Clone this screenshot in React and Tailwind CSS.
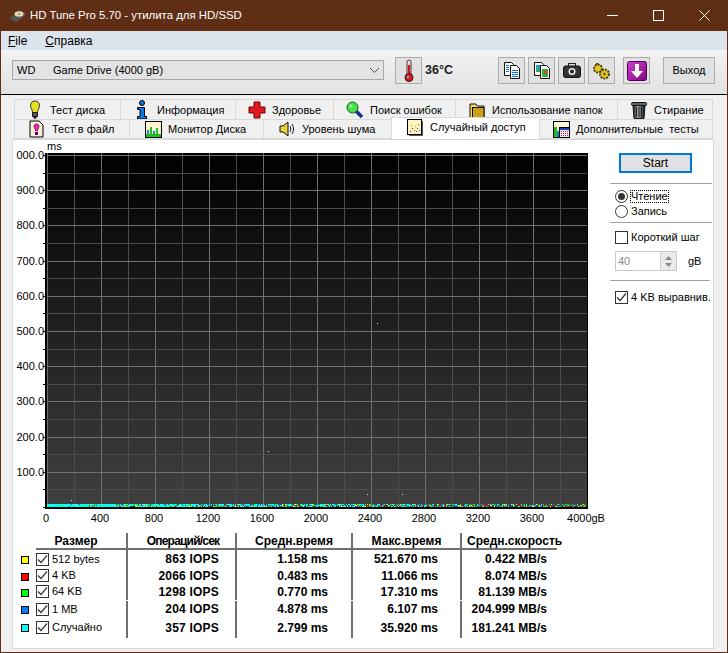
import React from 'react';

const font = 'font-["Liberation_Sans",Arial,sans-serif]';

// small hand drawn icons from the app
function Bulb() {
    return (
        <svg width="18" height="19" viewBox="0 0 18 19">
            <path d="M9 1c3 0 4.500 2 4.500 4.500 0 3-2 3.500-2 7h-5c0-3.500-2-4-2-7C4.500 3 6 1 9 1z" fill="#e6e020" stroke="#333" />
            <rect x="6.500" y="12.500" width="5" height="4" fill="#555" stroke="#222" />
            <rect x="7.500" y="16.500" width="3" height="2" fill="#111" />
        </svg>
    );
}
function Info() {
    return (
        <svg width="14" height="20" viewBox="0 0 14 20">
            <circle cx="7" cy="3" r="2.500" fill="#1078e0" stroke="#000" />
            <path d="M2.500 7.500h7v9h2v2.500h-9v-2.500h2.500v-7h-2.500z" fill="#1078e0" stroke="#000" />
        </svg>
    );
}
function Cross() {
    return (
        <svg width="18" height="18" viewBox="0 0 18 18">
            <path d="M6 1h6v5h5v6h-5v5H6v-5H1V6h5z" fill="#e01820" stroke="#700" />
        </svg>
    );
}
function Magnifier() {
    return (
        <svg width="18" height="18" viewBox="0 0 18 18">
            <path d="M10 10l6 6" stroke="#1a2a9a" strokeWidth="3.500" />
            <circle cx="6.500" cy="6.500" r="5.500" fill="#48e048" stroke="#186018" />
            <circle cx="5" cy="5" r="1.500" fill="#c8f8c8" />
        </svg>
    );
}
function Folder() {
    return (
        <svg width="16" height="18" viewBox="0 0 16 18">
            <path d="M1 16.500V3h6l1.500 2H15v11.500z" fill="#f0d860" stroke="#111" />
            <rect x="3.500" y="6.500" width="11.500" height="10" fill="#c8a018" stroke="#111" />
        </svg>
    );
}
function Trash() {
    return (
        <svg width="16" height="18" viewBox="0 0 16 18">
            <defs>
                <linearGradient id="tr" x1="0" x2="1">
                    <stop offset="0" stopColor="#111" />
                    <stop offset="0.4" stopColor="#aaa" />
                    <stop offset="1" stopColor="#111" />
                </linearGradient>
            </defs>
            <rect x="0.500" y="1.500" width="15" height="3" rx="1" fill="#666" stroke="#111" />
            <path d="M2 4.500h12l-1 13H3z" fill="url(#tr)" stroke="#111" />
            <path d="M5.500 6v10M8 6v10M10.500 6v10" stroke="#222" />
        </svg>
    );
}
function FileBang() {
    return (
        <svg width="15" height="18" viewBox="0 0 15 18">
            <path d="M1 1h9l4 4v12H1z" fill="#f4f0d8" stroke="#000" />
            <path d="M7.500 4c2 0 2.500 1 2.500 2.500S8.500 9 8.500 11h-2C6.500 9 5 8 5 6.500S5.500 4 7.500 4z" fill="#e020c0" stroke="#600" strokeWidth="0.600" />
            <rect x="6" y="12" width="3" height="3" fill="#700070" />
        </svg>
    );
}
function Bars() {
    return (
        <svg width="17" height="17" viewBox="0 0 17 17">
            <rect x="0.500" y="0.500" width="16" height="16" fill="#fbf6d0" stroke="#000" />
            <rect x="2" y="9" width="2" height="6" fill="#1880e0" />
            <rect x="5" y="6" width="2" height="9" fill="#20c020" />
            <rect x="8" y="10" width="2" height="5" fill="#1880e0" />
            <rect x="11" y="7" width="2" height="8" fill="#20c020" />
            <rect x="1" y="13" width="15" height="3" fill="#18c018" />
        </svg>
    );
}
function Speaker() {
    return (
        <svg width="17" height="16" viewBox="0 0 17 16">
            <path d="M1 5h3l5-4v14l-5-4H1z" fill="#e8d040" stroke="#111" />
            <path d="M11 5c1 2 1 4 0 6M13 3c2 3 2 7 0 10" fill="none" stroke="#111" />
        </svg>
    );
}
function Scatter() {
    return (
        <svg width="16" height="17" viewBox="0 0 16 17">
            <rect x="0.500" y="0.500" width="14" height="15" fill="#fbf3c0" stroke="#000" />
            <rect x="15" y="2" width="1" height="15" fill="#555" />
            <rect x="2" y="16" width="14" height="1" fill="#555" />
            {[[3,12,'#e02020'],[5,9,'#2040e0'],[7,11,'#e02020'],[8,7,'#d0a020'],[10,9,'#2040e0'],[11,5,'#e02020'],[12,11,'#20a020'],[4,6,'#d0a020'],[9,12,'#e02020']].map(([x, y, c], i) => (
                <rect key={i} x={x} y={y} width="1" height="1" fill={c} />
            ))}
        </svg>
    );
}
function BarsCalc() {
    return (
        <svg width="17" height="17" viewBox="0 0 17 17">
            <rect x="0.500" y="0.500" width="16" height="16" fill="#fbf6d0" stroke="#000" />
            <rect x="1" y="6" width="3" height="10" fill="#18c018" />
            <rect x="4" y="10" width="2" height="6" fill="#1880e0" />
            <rect x="6.500" y="6.500" width="10" height="10" fill="#e8e8f8" stroke="#000" />
            <rect x="7" y="7" width="9" height="2" fill="#2040c0" />
            {[8, 10, 12, 14].map(x => [10, 12, 14].map(y => <rect key={x + '-' + y} x={x} y={y} width="1" height="1" fill="#d02020" />))}
        </svg>
    );
}
function Thermo() {
    return (
        <svg width="12" height="24" viewBox="0 0 12 24">
            <rect x="4" y="1" width="4" height="15" rx="2" fill="#f0e0e0" stroke="#503030" />
            <rect x="5" y="6" width="2" height="11" fill="#d01818" />
            <circle cx="6" cy="18.500" r="4" fill="#d81818" stroke="#401010" />
            <circle cx="5" cy="18" r="1.300" fill="#50b0d0" />
        </svg>
    );
}
function CopyText() {
    return (
        <svg width="18" height="19" viewBox="0 0 18 19">
            <path d="M1.500 1.500h7l2 2v11h-9z" fill="#fff" stroke="#111" />
            <path d="M7.500 4.500h6l3 3v10h-9z" fill="#fff" stroke="#111" />
            {[9, 11, 13, 15].map(y => <rect key={y} x="9" y={y} width="6" height="1" fill="#1070e0" />)}
            {[4, 6, 8, 10].map(y => <rect key={y} x="3" y={y} width="3" height="1" fill="#1070e0" />)}
        </svg>
    );
}
function CopyImage() {
    return (
        <svg width="18" height="19" viewBox="0 0 18 19">
            <path d="M1.500 1.500h7l2 2v11h-9z" fill="#fff" stroke="#111" />
            <rect x="3" y="4" width="4" height="7" fill="#20a0d0" />
            <rect x="3" y="8" width="4" height="3" fill="#30b040" />
            <path d="M7.500 4.500h6l3 3v10h-9z" fill="#fff" stroke="#111" />
            <rect x="9" y="8" width="6" height="8" fill="#30b040" />
            <rect x="11" y="10" width="3" height="3" fill="#e04020" />
        </svg>
    );
}
function Camera() {
    return (
        <svg width="18" height="15" viewBox="0 0 18 15">
            <rect x="5.500" y="0.500" width="7" height="3" fill="#ddd" stroke="#222" />
            <rect x="0.500" y="3" width="17" height="11.500" rx="2" fill="#333" stroke="#111" />
            <circle cx="9" cy="8.500" r="3.500" fill="#f0f0f0" />
            <circle cx="9" cy="8.500" r="2" fill="#222" />
        </svg>
    );
}
function Gears() {
    return (
        <svg width="19" height="18" viewBox="0 0 19 18">
            <path d="M5 1v5M9 4v5" stroke="#504010" strokeWidth="2" />
            <circle cx="6" cy="6.500" r="4" fill="#e0cc20" stroke="#504010" strokeWidth="2" strokeDasharray="2 1" />
            <circle cx="12.500" cy="12" r="4.500" fill="#e0cc20" stroke="#504010" strokeWidth="2" strokeDasharray="2 1" />
            <circle cx="12.500" cy="12" r="1.200" fill="#504010" />
        </svg>
    );
}
function Save() {
    return (
        <svg width="20" height="20" viewBox="0 0 20 20">
            <defs>
                <linearGradient id="sv" x1="0" x2="1" y1="0" y2="1">
                    <stop offset="0" stopColor="#d040d0" />
                    <stop offset="1" stopColor="#800880" />
                </linearGradient>
            </defs>
            <rect x="0.500" y="0.500" width="19" height="19" rx="2" fill="url(#sv)" stroke="#500050" />
            <path d="M8 3h4v7h4l-6 7-6-7h4z" fill="#fff" />
        </svg>
    );
}
function HddLogo() {
    return (
        <svg width="16" height="14" viewBox="0 0 16 14">
            <path d="M1 8l9-7 5 3v3l-9 6-5-3z" fill="#555" />
            <ellipse cx="9" cy="5" rx="4.500" ry="2.700" fill="#e8d8b0" />
            <circle cx="9" cy="5" r="1" fill="#908060" />
        </svg>
    );
}

const tabsTop = [
    { label: 'Тест диска', icon: <Bulb />, w: 'w-[107px]', pad: 'pl-[11px]', gap: 'gap-[6px]' },
    { label: 'Информация', icon: <Info />, w: 'w-[116px]', pad: 'pl-[14px]', gap: 'gap-[8px]' },
    { label: 'Здоровье', icon: <Cross />, w: 'w-[99px]', pad: 'pl-[12px]', gap: 'gap-[6px]' },
    { label: 'Поиск ошибок', icon: <Magnifier />, w: 'w-[123px]', pad: 'pl-[12px]', gap: 'gap-[6px]' },
    { label: 'Использование папок', icon: <Folder />, w: 'w-[163px]', pad: 'pl-[13px]', gap: 'gap-[7px]' },
    { label: 'Стирание', icon: <Trash />, w: 'w-[96px]', pad: 'pl-[13px]', gap: 'gap-[7px]' },
];

const tabsBottom = [
    { label: 'Тест в файл', icon: <FileBang />, w: 'w-[116px]', pad: 'pl-[14px]', gap: 'gap-[8px]' },
    { label: 'Монитор Диска', icon: <Bars />, w: 'w-[135px]', pad: 'pl-[15px]', gap: 'gap-[6px]' },
    { label: 'Уровень шума', icon: <Speaker />, w: 'w-[129px]', pad: 'pl-[15px]', gap: 'gap-[6px]' },
    { label: 'Случайный доступ', icon: <Scatter />, w: 'w-[149px]', pad: 'pl-[15px]', gap: 'gap-[7px]', active: true },
    { label: 'Дополнительные  тесты', icon: <BarsCalc />, w: 'w-[174px]', pad: 'pl-[13px]', gap: 'gap-[6px]' },
];

const rows = [
    { color: 'bg-[#ffff00]', h: 'h-[18px]', name: '512 bytes', iops: '863 IOPS', avg: '1.158 ms', max: '521.670 ms', speed: '0.422 MB/s' },
    { color: 'bg-[#ff0000]', h: 'h-[15px]', name: '4 KB', iops: '2066 IOPS', avg: '0.483 ms', max: '11.066 ms', speed: '8.074 MB/s' },
    { color: 'bg-[#00ff00]', h: 'h-[17px]', name: '64 KB', iops: '1298 IOPS', avg: '0.770 ms', max: '17.310 ms', speed: '81.139 MB/s' },
    { color: 'bg-[#0080ff]', h: 'h-[17px]', name: '1 MB', iops: '204 IOPS', avg: '4.878 ms', max: '6.107 ms', speed: '204.999 MB/s' },
    { color: 'bg-[#00ffff]', h: 'h-[20px]', name: 'Случайно', iops: '357 IOPS', avg: '2.799 ms', max: '35.920 ms', speed: '181.241 MB/s' },
];

const yLabels = ['000.0', '900.0', '800.0', '700.0', '600.0', '500.0', '400.0', '300.0', '200.0', '100.0'];
const xLabels = ['0', '400', '800', '1200', '1600', '2000', '2400', '2800', '3200', '3600', '4000gB'];

function Check({ checked }) {
    return (
        <span className="w-[13px] h-[13px] border border-[#333] bg-white flex items-center justify-center shrink-0">
            {checked && (
                <svg width="11" height="11" viewBox="0 0 11 11">
                    <path d="M1 5.500l3 3 6-7" fill="none" stroke="#333" strokeWidth="1.200" />
                </svg>
            )}
        </span>
    );
}

// scatter along the bottom of the plot, seeded so the picture stays the same
function makePoints() {
    const mixed = ['#00ff00', '#ff0000', '#ffff00', '#0080ff', '#00ffff'];
    const pts = [];
    let seed = 7;
    const next = () => {
        seed = (seed * 16807) % 2147483647;
        return seed / 2147483647;
    };
    for (let x = 2; x < 541; x++) {
        const t = x / 540;
        for (let y = 351; y < 354; y++) {
            // left side is almost solid cyan, right side thins out into mixed dots
            if (next() > 0.98 - t * 0.55) continue;
            const c = next() < t * 0.95 ? mixed[Math.floor(next() * 5)] : next() < 0.08 ? '#00ff00' : '#00ffff';
            pts.push({ x, y, c });
        }
    }
    return pts;
}
const points = makePoints();
const outliers = [[332, 170], [223, 298], [26, 347], [322, 341], [357, 341]];

function Chart() {
    const vLines = [];
    for (let i = 0; i <= 20; i++) vLines.push(2 + i * 27);
    const hLines = [];
    for (let i = 0; i <= 20; i++) hLines.push(Math.round(2 + i * 17.6));
    return (
        <svg width="545" height="356" viewBox="-2 0 545 356" className="block -ml-[2px]">
            <defs>
                <linearGradient id="plot" x1="0" x2="0" y1="0" y2="1">
                    <stop offset="0" stopColor="#000000" />
                    <stop offset="1" stopColor="#404040" />
                </linearGradient>
            </defs>
            <rect width="543" height="356" fill="url(#plot)" />
            {vLines.map((x, i) => (
                <line key={x} x1={x + 0.5} x2={x + 0.5} y1="0" y2="354" stroke={i % 2 === 0 ? '#707070' : '#4c4c4c'} />
            ))}
            {hLines.map((y, i) => (
                <line key={y} x1="0" x2="542" y1={y + 0.5} y2={y + 0.5} stroke={i % 2 === 0 ? '#707070' : '#4c4c4c'} />
            ))}
            {hLines.map(y => <rect key={y} x="-2" y={y} width="4" height="1" fill="#000" />)}
            {points.map((p, i) => <rect key={i} x={p.x} y={p.y} width="1" height="1" fill={p.c} />)}
            {outliers.map(([x, y]) => <rect key={x} x={x} y={y} width="1" height="1" fill="#e0e0e0" />)}
            <rect y="354" width="542" height="2" fill="#000" />
            <rect x="542" width="1" height="356" fill="#000" />
            <rect width="2" height="356" fill="#000" />
        </svg>
    );
}

export default function App() {
    return (
        <div className={`w-[728px] h-[653px] flex flex-col border-x border-b border-[#5f2e15] text-[11px] leading-none text-black overflow-hidden ${font}`}>
            <div className="h-[31px] bg-[#5f2e15] text-white flex items-center shrink-0">
                <span className="ml-[9px] mr-[4px]"><HddLogo /></span>
                <span className="text-[11.400px]">HD Tune Pro 5.70 - утилита для HD/SSD</span>
                <div className="ml-auto flex items-center h-full">
                    <span className="w-[46px] flex justify-center">
                        <svg width="11" height="11" viewBox="0 0 11 11"><path d="M0 5.500h11" stroke="#fff" /></svg>
                    </span>
                    <span className="w-[46px] flex justify-center">
                        <svg width="11" height="11" viewBox="0 0 11 11"><rect x="0.500" y="0.500" width="10" height="10" fill="none" stroke="#fff" /></svg>
                    </span>
                    <span className="w-[46px] flex justify-center">
                        <svg width="11" height="11" viewBox="0 0 11 11"><path d="M0.500 0.500l10 10M10.500 0.500l-10 10" stroke="#fff" /></svg>
                    </span>
                </div>
            </div>

            <div className="h-[19px] bg-[#dbe3ec] flex items-center gap-[18px] pl-[7px] shrink-0 text-[12px]">
                <span><span className="underline">F</span>ile</span>
                <span><span className="underline">С</span>правка</span>
            </div>

            <div className="h-[45px] bg-gradient-to-b from-[#f2f2f2] to-[#e2e2e2] border-b border-black flex items-start pt-[7px] pl-[11px] shrink-0">
                <div className="w-[372px] h-[20px] mt-[3px] bg-[#e3e3e3] border border-[#a8a8a8] flex items-center pl-[4px]">
                    <span className="w-[36px]">WD</span>
                    <span>Game Drive (4000 gB)</span>
                    <svg className="ml-auto mr-[3px]" width="11" height="7" viewBox="0 0 11 7">
                        <path d="M1 1l4.500 4.500L10 1" fill="none" stroke="#555" />
                    </svg>
                </div>
                <div className="w-[27px] h-[27px] ml-[11px] bg-[#e1e1e1] border border-[#adadad] flex items-center justify-center">
                    <Thermo />
                </div>
                <span className="w-[30px] ml-[3px] mt-[7px] text-[12.500px] font-bold text-[#222]">36°C</span>
                <div className="flex gap-[3px] ml-[43px]">
                    <div className="w-[27px] h-[27px] bg-[#e1e1e1] border border-[#adadad] flex items-center justify-center"><CopyText /></div>
                    <div className="w-[27px] h-[27px] bg-[#e1e1e1] border border-[#adadad] flex items-center justify-center"><CopyImage /></div>
                    <div className="w-[27px] h-[27px] bg-[#e1e1e1] border border-[#adadad] flex items-center justify-center"><Camera /></div>
                    <div className="w-[27px] h-[27px] bg-[#e1e1e1] border border-[#adadad] flex items-center justify-center"><Gears /></div>
                </div>
                <div className="w-[27px] h-[27px] ml-[8px] bg-[#e1e1e1] border border-[#adadad] flex items-center justify-center"><Save /></div>
                <div className="w-[52px] h-[27px] ml-[13px] bg-[#e1e1e1] border border-[#adadad] flex items-center justify-center">Выход</div>
            </div>

            <div className="flex-1 bg-[#f0f0f0] pl-[11px] pr-[13px] pt-[4px] pb-[3px] flex flex-col min-h-0">
                <div className="flex h-[20px] shrink-0 pl-[2px]">
                    {tabsTop.map(t => (
                        <div key={t.label} className={`${t.w} ${t.pad} ${t.gap} border border-[#d9d9d9] border-b-0 -mr-px flex items-center`}>
                            {t.icon}
                            <span className="mt-[1px]">{t.label}</span>
                        </div>
                    ))}
                </div>
                <div className="flex h-[20px] shrink-0 pl-[2px] relative z-10">
                    {tabsBottom.map(t => (
                        <div
                            key={t.label}
                            className={`${t.w} ${t.pad} ${t.gap} -mr-px flex items-center ${t.active ? 'bg-white h-[22px] -mt-[2px] border border-[#d9d9d9] border-b-0 relative z-10 pb-[2px]' : 'border border-[#d9d9d9]'}`}
                        >
                            {t.icon}
                            <span className={`whitespace-pre ${t.active ? '' : 'mt-[1px]'}`}>{t.label}</span>
                        </div>
                    ))}
                </div>

                <div className="flex-1 bg-white border border-[#d9d9d9] min-h-0 flex">
                    <div className="w-[591px] shrink-0 flex flex-col">
                        <div className="flex mt-[1px]">
                            <div className="w-[32px] shrink-0 flex flex-col items-end h-[368px]">
                                {yLabels.map(l => (
                                    <span key={l} className="h-[35.200px] pt-[9px] pr-[1px]">{l}</span>
                                ))}
                            </div>
                            <div className="flex flex-col">
                                <span className="h-[12px] pl-[2px] leading-[11px]">ms</span>
                                <Chart />
                            </div>
                        </div>
                        <div className="flex pl-[6px] w-[591px] h-[13px] mt-[4px]">
                            {xLabels.map(l => (
                                <span key={l} className="w-[54px] shrink-0 text-center">{l}</span>
                            ))}
                        </div>

                        <div className="ml-[8px] mt-[7px] flex">
                            <div className="w-[15px] shrink-0 pt-[18px] flex flex-col">
                                {rows.map(r => (
                                    <div key={r.name} className={`${r.h} flex items-center`}>
                                        <span className={`w-[8px] h-[8px] border border-black ${r.color}`} />
                                    </div>
                                ))}
                            </div>
                            <div className="grid grid-cols-[92px_109px_116px_109px_95px] text-[12px]">
                                <div className="h-[17px] border-b-2 border-r-2 border-[#707070] flex items-center justify-center font-bold pr-[10px]">Размер</div>
                                <div className="h-[17px] border-b-2 border-r-2 border-[#707070] flex items-center justify-center font-bold pl-[3px] tracking-[-0.800px]">Операций/сек</div>
                                <div className="h-[17px] border-b-2 border-r-2 border-[#707070] flex items-center justify-center font-bold">Средн.время</div>
                                <div className="h-[17px] border-b-2 border-r-2 border-[#707070] flex items-center justify-center font-bold">Макс.время</div>
                                <div className="h-[17px] border-b-2 border-[#707070] flex items-center pl-[5px] font-bold whitespace-nowrap">Средн.скорость</div>
                                {rows.map(r => (
                                    <React.Fragment key={r.name}>
                                        <div className={`${r.h} border-r-2 border-[#707070] flex items-center gap-[3px] text-[11px]`}>
                                            <Check checked />
                                            <span>{r.name}</span>
                                        </div>
                                        <div className={`${r.h} border-r-2 border-[#707070] flex items-center justify-end pr-[16px] font-bold tracking-[0.200px]`}>{r.iops}</div>
                                        <div className={`${r.h} border-r-2 border-[#707070] flex items-center justify-end pr-[23px] font-bold`}>{r.avg}</div>
                                        <div className={`${r.h} border-r-2 border-[#707070] flex items-center justify-end pr-[22px] font-bold`}>{r.max}</div>
                                        <div className={`${r.h} flex items-center justify-end pr-[10px] font-bold`}>{r.speed}</div>
                                    </React.Fragment>
                                ))}
                            </div>
                        </div>
                    </div>

                    <div className="flex-1 flex flex-col pt-[13px] min-w-0">
                        <div className="w-[73px] h-[20px] ml-[15px] border-2 border-[#0078d7] bg-[#e1e1e1] flex items-center justify-center text-[12px]">Start</div>
                        <div className="h-px bg-[#a0a0a0] mt-[10px] ml-[6px] mr-px" />
                        <div className="pl-[11px] flex flex-col mt-[4px]">
                            <div className="h-[16px] flex items-center gap-[3px]">
                                <span className="w-[13px] h-[13px] rounded-full border border-[#333] bg-white flex items-center justify-center">
                                    <span className="w-[7px] h-[7px] rounded-full bg-[#333]" />
                                </span>
                                <span className="outline-1 outline-dotted outline-black">Чтение</span>
                            </div>
                            <div className="h-[15px] flex items-center gap-[3px]">
                                <span className="w-[13px] h-[13px] rounded-full border border-[#333] bg-white" />
                                <span>Запись</span>
                            </div>
                        </div>
                        <div className="h-px bg-[#a0a0a0] mt-[3px] ml-[6px] mr-px" />
                        <div className="pl-[11px] mt-[7px] flex items-center gap-[3px] h-[15px]">
                            <Check />
                            <span>Короткий шаг</span>
                        </div>
                        <div className="ml-[11px] mt-[6px] flex items-center">
                            <div className="w-[62px] h-[20px] border border-[#c8c8c8] bg-white flex items-center pl-[2px] text-[#8a8a8a]">
                                <span>40</span>
                                <div className="ml-auto w-[16px] h-[18px] bg-[#eaeaea] border-l border-[#d0d0d0] flex flex-col items-center justify-center gap-[3px]">
                                    <svg width="7" height="4" viewBox="0 0 7 4"><path d="M3.500 0L7 4H0z" fill="#8a8a8a" /></svg>
                                    <svg width="7" height="4" viewBox="0 0 7 4"><path d="M3.500 4L0 0h7z" fill="#8a8a8a" /></svg>
                                </div>
                            </div>
                            <span className="ml-[11px]">gB</span>
                        </div>
                        <div className="h-px bg-[#a0a0a0] mt-[9px] ml-[6px] mr-[3px]" />
                        <div className="pl-[11px] mt-[9px] flex items-center gap-[3px] h-[15px] whitespace-nowrap">
                            <Check checked />
                            <span>4 KB выравнив.</span>
                        </div>
                    </div>
                </div>
            </div>
        </div>
    );
}
